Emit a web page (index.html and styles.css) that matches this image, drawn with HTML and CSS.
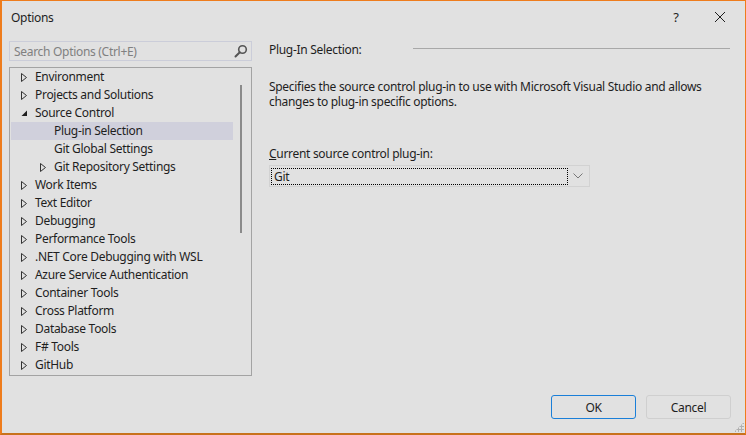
FILE: index.html
```html
<!DOCTYPE html>
<html>
<head>
<meta charset="utf-8">
<link rel="stylesheet" href="styles.css">
</head>
<body>
<div class="window">
  <div class="titlebar">
    <span class="title">Options</span>
    <span class="help">?</span>
    <span class="close"><svg width="12" height="12" viewBox="0 0 12 12"><path d="M1 1L11 11M11 1L1 11" stroke="#1e1e1e" stroke-width="1" fill="none"/></svg></span>
  </div>
  <div class="content">
    <div class="left">
      <div class="search">
        <span class="placeholder">Search Options (Ctrl+E)</span>
        <svg class="mag" width="14" height="14" viewBox="0 0 14 14"><circle cx="8.5" cy="5.5" r="3.8" stroke="#555" stroke-width="1.6" fill="none"/><path d="M5.8 8.2L1.5 12.5" stroke="#555" stroke-width="2" stroke-linecap="round"/></svg>
      </div>
      <div class="tree">
        <div class="rows">
          <div class="row l1"><span class="arrow"><svg width="6" height="9" viewBox="0 0 6 9"><path d="M0.5 0.5L5.5 4.5L0.5 8.5Z" stroke="#333" fill="none"/></svg></span>Environment</div>
          <div class="row l1"><span class="arrow"><svg width="6" height="9" viewBox="0 0 6 9"><path d="M0.5 0.5L5.5 4.5L0.5 8.5Z" stroke="#333" fill="none"/></svg></span>Projects and Solutions</div>
          <div class="row l1"><span class="arrow"><svg width="6" height="9" viewBox="0 0 6 9"><path d="M6 1.5L6 7L0.5 7Z" fill="#1e1e1e"/></svg></span>Source Control</div>
          <div class="row l2 selected"><span class="arrow"></span>Plug-in Selection</div>
          <div class="row l2"><span class="arrow"></span>Git Global Settings</div>
          <div class="row l2"><span class="arrow"><svg width="6" height="9" viewBox="0 0 6 9"><path d="M0.5 0.5L5.5 4.5L0.5 8.5Z" stroke="#333" fill="none"/></svg></span>Git Repository Settings</div>
          <div class="row l1"><span class="arrow"><svg width="6" height="9" viewBox="0 0 6 9"><path d="M0.5 0.5L5.5 4.5L0.5 8.5Z" stroke="#333" fill="none"/></svg></span>Work Items</div>
          <div class="row l1"><span class="arrow"><svg width="6" height="9" viewBox="0 0 6 9"><path d="M0.5 0.5L5.5 4.5L0.5 8.5Z" stroke="#333" fill="none"/></svg></span>Text Editor</div>
          <div class="row l1"><span class="arrow"><svg width="6" height="9" viewBox="0 0 6 9"><path d="M0.5 0.5L5.5 4.5L0.5 8.5Z" stroke="#333" fill="none"/></svg></span>Debugging</div>
          <div class="row l1"><span class="arrow"><svg width="6" height="9" viewBox="0 0 6 9"><path d="M0.5 0.5L5.5 4.5L0.5 8.5Z" stroke="#333" fill="none"/></svg></span>Performance Tools</div>
          <div class="row l1"><span class="arrow"><svg width="6" height="9" viewBox="0 0 6 9"><path d="M0.5 0.5L5.5 4.5L0.5 8.5Z" stroke="#333" fill="none"/></svg></span>.NET Core Debugging with WSL</div>
          <div class="row l1"><span class="arrow"><svg width="6" height="9" viewBox="0 0 6 9"><path d="M0.5 0.5L5.5 4.5L0.5 8.5Z" stroke="#333" fill="none"/></svg></span>Azure Service Authentication</div>
          <div class="row l1"><span class="arrow"><svg width="6" height="9" viewBox="0 0 6 9"><path d="M0.5 0.5L5.5 4.5L0.5 8.5Z" stroke="#333" fill="none"/></svg></span>Container Tools</div>
          <div class="row l1"><span class="arrow"><svg width="6" height="9" viewBox="0 0 6 9"><path d="M0.5 0.5L5.5 4.5L0.5 8.5Z" stroke="#333" fill="none"/></svg></span>Cross Platform</div>
          <div class="row l1"><span class="arrow"><svg width="6" height="9" viewBox="0 0 6 9"><path d="M0.5 0.5L5.5 4.5L0.5 8.5Z" stroke="#333" fill="none"/></svg></span>Database Tools</div>
          <div class="row l1"><span class="arrow"><svg width="6" height="9" viewBox="0 0 6 9"><path d="M0.5 0.5L5.5 4.5L0.5 8.5Z" stroke="#333" fill="none"/></svg></span>F# Tools</div>
          <div class="row l1"><span class="arrow"><svg width="6" height="9" viewBox="0 0 6 9"><path d="M0.5 0.5L5.5 4.5L0.5 8.5Z" stroke="#333" fill="none"/></svg></span>GitHub</div>
        </div>
        <div class="scrollbar"><div class="thumb"></div></div>
      </div>
    </div>
    <div class="right">
      <div class="heading"><span class="htext">Plug-In Selection:</span><span class="rule"></span></div>
      <p class="desc">Specifies the source control plug-in to use with Microsoft Visual Studio and allows changes to plug-in specific options.</p>
      <div class="label"><u>C</u>urrent source control plug-in:</div>
      <div class="combo">
        <div class="value"><span>Git</span></div>
        <span class="drop"><svg width="10" height="6" viewBox="0 0 10 6"><path d="M0.5 0.5L5 5L9.5 0.5" stroke="#777" fill="none"/></svg></span>
      </div>
    </div>
  </div>
  <div class="footer">
    <button class="btn primary">OK</button>
    <button class="btn">Cancel</button>
  </div>
  <div class="grip"></div>
</div>
</body>
</html>
```

FILE: styles.css
```css
* { box-sizing: border-box; }
html, body { margin: 0; padding: 0; }
body {
  width: 746px;
  height: 435px;
  overflow: hidden;
  font-family: "Noto Sans", "Open Sans", sans-serif;
  font-size: 12px;
  letter-spacing: -0.3px;
  color: #1e1e1e;
  background: #e1e1e1;
}
.window {
  position: relative;
  width: 746px;
  height: 435px;
  background: #e1e1e1;
  border-style: solid;
  border-color: #ee7c1c;
  border-width: 1px 1px 2px 2px;
  border-bottom-color: #c8721c;
  display: flex;
  flex-direction: column;
}
.titlebar {
  height: 32px;
  display: flex;
  align-items: center;
  padding-left: 9px;
}
.title { flex: 1; font-size: 12px; }
.help { width: 12px; text-align: center; font-size: 13px; margin-right: 32px; }
.close { width: 12px; height: 12px; margin-right: 19px; display: flex; }
.content {
  display: flex;
  padding-top: 8px;
  padding-left: 7px;
  height: 343px;
}
.left { width: 243px; display: flex; flex-direction: column; }
.search {
  height: 20px;
  border: 1px solid #cbcdd9;
  display: flex;
  align-items: center;
  padding-left: 4px;
  padding-right: 3px;
}
.placeholder { flex: 1; color: #808080; }
.mag { display: block; }
.tree {
  margin-top: 6px;
  height: 309px;
  border: 1px solid #a3a3a3;
  display: flex;
  padding: 0 0 0 1px;
}
.rows { width: 222px; }
.row {
  height: 18px;
  line-height: 18px;
  display: flex;
  align-items: center;
  white-space: nowrap;
}
.row.l1 { padding-left: 10px; }
.row.l2 { padding-left: 29px; }
.arrow { width: 14px; height: 18px; display: flex; align-items: center; }
.arrow svg { display: block; }
.row.selected { background: #d0d0dc; }
.scrollbar { flex: 1; position: relative; }
.thumb {
  position: absolute;
  left: 7px;
  top: 17px;
  width: 2px;
  height: 148px;
  background: #8a8a8a;
}
.right { flex: 1; padding-left: 17px; padding-right: 15px; }
.heading {
  display: flex;
  align-items: center;
  height: 16px;
}
.htext { width: 144px; }
.rule { flex: 1; height: 1px; background: #a8a8a8; margin-top: -1px; }
.desc {
  margin: 22px 0 0 0;
  line-height: 15px;
  width: 450px;
}
.label { margin-top: 37px; line-height: 16px; }
.combo {
  margin-top: 3px;
  width: 321px;
  height: 22px;
  border: 1px solid #d2d2d2;
  display: flex;
  align-items: center;
  padding: 0 1px;
}
.value {
  flex: 1;
  height: 17px;
  border: 1px dotted #000;
  display: flex;
  align-items: center;
  padding-left: 2px;
}
.drop { width: 20px; display: flex; justify-content: center; align-items: center; }
.drop svg { display: block; }
.footer {
  display: flex;
  justify-content: flex-end;
  gap: 10px;
  padding-right: 14px;
  padding-top: 19px;
}
.btn {
  width: 85px;
  height: 24px;
  font-family: inherit;
  font-size: 12px;
  letter-spacing: inherit;
  color: #1e1e1e;
  background: #e1e1e1;
  border: 1px solid #cfcfcf;
  border-radius: 3px;
  padding: 0;
}
.btn.primary { border-color: #1a7fd8; }
.grip {
  position: absolute;
  right: 1px;
  bottom: 1px;
  width: 10px;
  height: 10px;
  background-image: radial-gradient(circle, #b0b0b0 1px, transparent 1.2px);
  background-size: 3px 3px;
  clip-path: polygon(100% 0, 100% 100%, 0 100%);
}
```
